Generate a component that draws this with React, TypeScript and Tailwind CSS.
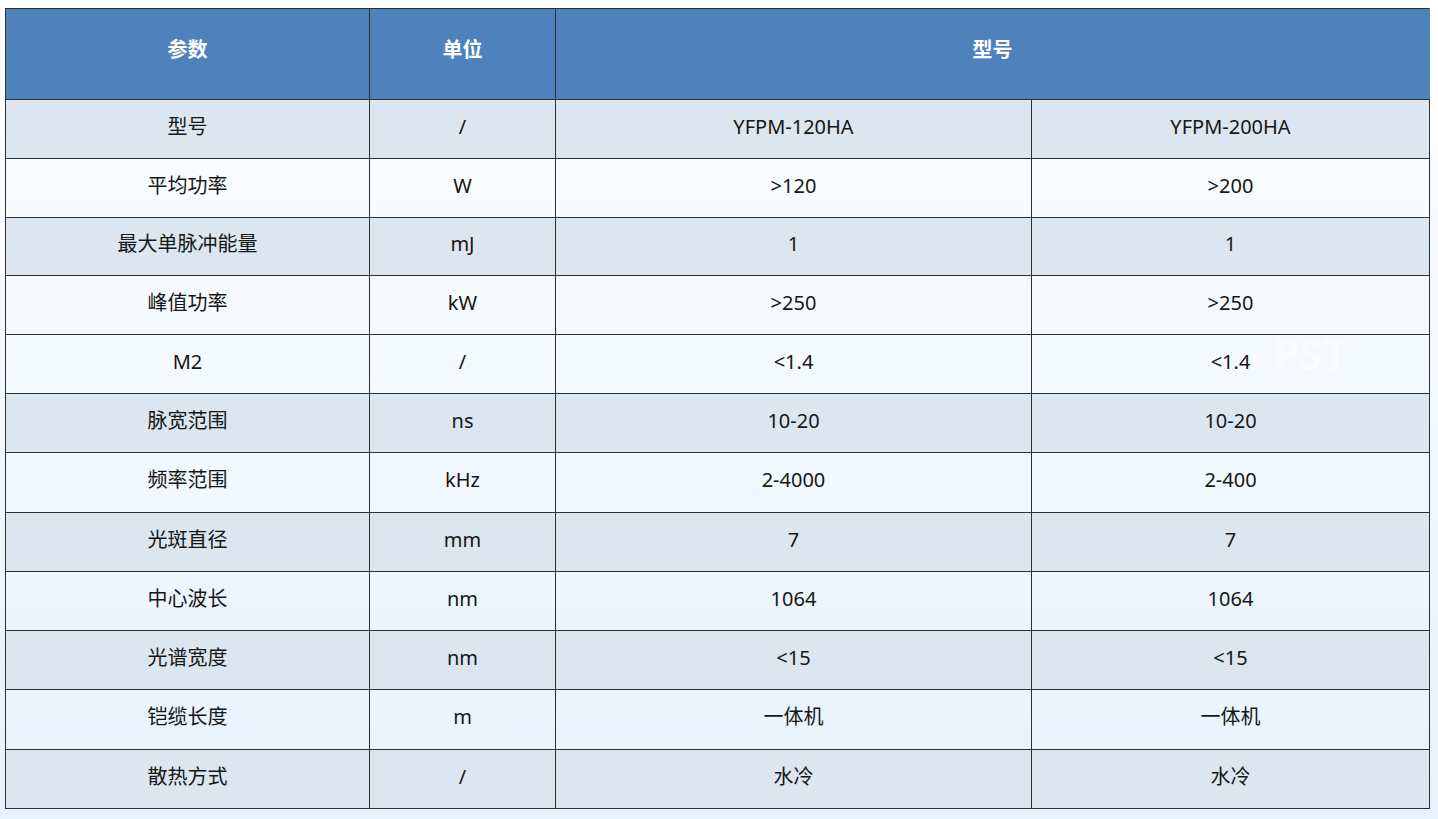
import React from 'react';

const rows = [
  { name: '型号', unit: '/', a: 'YFPM-120HA', b: 'YFPM-200HA', dark: true },
  { name: '平均功率', unit: 'W', a: '>120', b: '>200', dark: false },
  { name: '最大单脉冲能量', unit: 'mJ', a: '1', b: '1', dark: true },
  { name: '峰值功率', unit: 'kW', a: '>250', b: '>250', dark: false },
  { name: 'M2', unit: '/', a: '<1.4', b: '<1.4', dark: false },
  { name: '脉宽范围', unit: 'ns', a: '10-20', b: '10-20', dark: true },
  { name: '频率范围', unit: 'kHz', a: '2-4000', b: '2-400', dark: false },
  { name: '光斑直径', unit: 'mm', a: '7', b: '7', dark: true },
  { name: '中心波长', unit: 'nm', a: '1064', b: '1064', dark: false },
  { name: '光谱宽度', unit: 'nm', a: '<15', b: '<15', dark: true },
  { name: '铠缆长度', unit: 'm', a: '一体机', b: '一体机', dark: false },
  { name: '散热方式', unit: '/', a: '水冷', b: '水冷', dark: true },
];

const cell = 'border border-[#2f2f2f] text-center align-middle p-0 pb-[5px] leading-[24px]';

export default function App() {
  return (
    <div
      className="relative w-[1438px] h-[819px] overflow-hidden bg-gradient-to-b from-white to-[#e6f2fd] pt-[8px] pl-[5px]"
      style={{ fontFamily: '"Noto Sans", "Noto Sans CJK SC", sans-serif' }}
    >
      <table className="w-[1424px] border-collapse text-[20px] text-[#161616] table-fixed">
        <colgroup>
          <col className="w-[364px]" />
          <col className="w-[186px]" />
          <col className="w-[476px]" />
          <col className="w-[398px]" />
        </colgroup>
        <thead>
          <tr className="h-[91px] bg-[#4f81bd] text-white">
            <th className={`${cell} font-bold pb-[9px]`}>参数</th>
            <th className={`${cell} font-bold pb-[9px]`}>单位</th>
            <th className={`${cell} font-bold pb-[9px] border-r-[#4f81bd]`} colSpan={2}>型号</th>
          </tr>
        </thead>
        <tbody>
          {rows.map((r, i) => (
            <tr
              key={i}
              className={`${i === 6 || i === 10 ? 'h-[60px]' : i === 2 ? 'h-[58px]' : 'h-[59px]'} ${r.dark ? 'bg-[#dce6f1]' : 'bg-transparent'}`}
            >
              <td className={cell}>{r.name}</td>
              <td className={cell}>{r.unit}</td>
              <td className={cell}>{r.a}</td>
              <td className={cell}>{r.b}</td>
            </tr>
          ))}
        </tbody>
      </table>
      {/* faint watermark */}
      <div className="absolute left-[1273px] top-[322px] text-[42px] font-bold text-white/60 select-none">
        PST
      </div>
    </div>
  );
}
